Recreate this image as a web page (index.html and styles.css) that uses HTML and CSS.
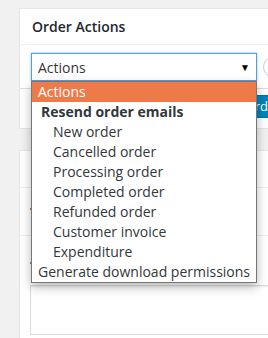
FILE: index.html
```html
<!DOCTYPE html>
<html>
<head>
<meta charset="utf-8">
<link rel="stylesheet" href="styles.css">
</head>
<body>
<div class="page">
  <div class="postbox box-actions">
    <div class="postbox-head"><h2>Order Actions</h2></div>
    <div class="actions-row">
      <div class="select">
        <span>Actions</span>
        <span class="caret">▼</span>
      </div>
      <span class="round-btn"></span>
      <ul class="dropdown">
        <li class="opt selected">Actions</li>
        <li class="group">Resend order emails</li>
        <li class="opt sub">New order</li>
        <li class="opt sub">Cancelled order</li>
        <li class="opt sub">Processing order</li>
        <li class="opt sub">Completed order</li>
        <li class="opt sub">Refunded order</li>
        <li class="opt sub">Customer invoice</li>
        <li class="opt sub">Expenditure</li>
        <li class="opt">Generate download permissions</li>
      </ul>
    </div>
    <div class="actions-foot">
      <button class="save-btn">Save Order</button>
    </div>
  </div>
  <div class="postbox box-notes">
    <div class="notes-head"></div>
    <div class="notes-row"><span class="dot"></span></div>
    <div class="notes-add">
      <span class="dot"></span>
      <div class="textarea"></div>
    </div>
  </div>
</div>
</body>
</html>
```

FILE: styles.css
```css
html, body {
  margin: 0;
  padding: 0;
  background: #f1f1f1;
  overflow: hidden;
  width: 268px;
  height: 338px;
}
.page {
  padding: 8px 0 0 19px;
  font-family: "Open Sans", sans-serif;
  color: #32373c;
}
.postbox {
  background: #fff;
  border: 1px solid #e5e5e5;
  width: 300px;
  box-sizing: border-box;
}
.postbox-head {
  height: 35px;
  border-bottom: 1px solid #eee;
  display: flex;
  align-items: center;
  padding-left: 12px;
}
.postbox-head h2 {
  margin: 0;
  font-size: 14px;
  font-weight: 600;
  color: #23282d;
  line-height: 1;
}
.actions-row {
  position: relative;
  padding: 8px 0 7px 11px;
  display: flex;
  align-items: center;
  gap: 6px;
  border-bottom: 1px solid #ddd;
}
.select {
  width: 226px;
  height: 28px;
  box-sizing: border-box;
  border: 1px solid #5b9dd9;
  box-shadow: 0 0 2px rgba(30,140,190,.6);
  background: #fff;
  display: flex;
  align-items: center;
  justify-content: space-between;
  padding: 0 6px 0 6px;
  font-size: 14px;
  color: #32373c;
}
.caret {
  font-size: 10px;
  color: #000;
  margin-right: 0;
}
.round-btn {
  width: 20px;
  height: 20px;
  border: 1px solid #ccc;
  border-radius: 50%;
  flex: none;
}
.dropdown {
  position: absolute;
  left: 11px;
  top: 36px;
  width: 226px;
  box-sizing: border-box;
  margin: 0;
  padding: 0;
  list-style: none;
  background: #fff;
  border: 1px solid #767676;
  box-shadow: 0 4px 10px rgba(0,0,0,.28);
  z-index: 5;
}
.dropdown li {
  height: 20px;
  line-height: 20px;
  font-size: 14px;
  white-space: nowrap;
  color: #32373c;
  padding-left: 6px;
}
.dropdown .group {
  font-weight: 700;
  padding-left: 9px;
}
.dropdown .sub {
  padding-left: 21px;
}
.dropdown .selected {
  background: #ef7a49;
  color: #fff;
}
.actions-foot {
  height: 39px;
  display: flex;
  align-items: flex-start;
  padding: 6px 0 0 182px;
  box-sizing: border-box;
}
.save-btn {
  height: 23px;
  background: #0085ba;
  border: 1px solid #0073aa;
  color: #fff;
  font-family: "Open Sans", sans-serif;
  font-size: 13px;
  padding: 0 10px;
  border-radius: 3px;
  line-height: 21px;
  white-space: nowrap;
}
.box-notes {
  margin-top: 21px;
  height: 200px;
}
.notes-head {
  height: 36px;
  border-bottom: 1px solid #eee;
}
.notes-row {
  height: 47px;
  border-bottom: 1px solid #eee;
  position: relative;
}
.notes-add {
  position: relative;
  padding: 49px 0 0 10px;
}
.dot {
  position: absolute;
  left: 10px;
  width: 2px;
  height: 2px;
  background: #c57a3c;
}
.notes-row .dot { top: 20px; }
.notes-add .dot { top: 26px; }
.textarea {
  height: 48px;
  border: 1px solid #ddd;
  box-shadow: inset 0 1px 2px rgba(0,0,0,.07);
}
```
